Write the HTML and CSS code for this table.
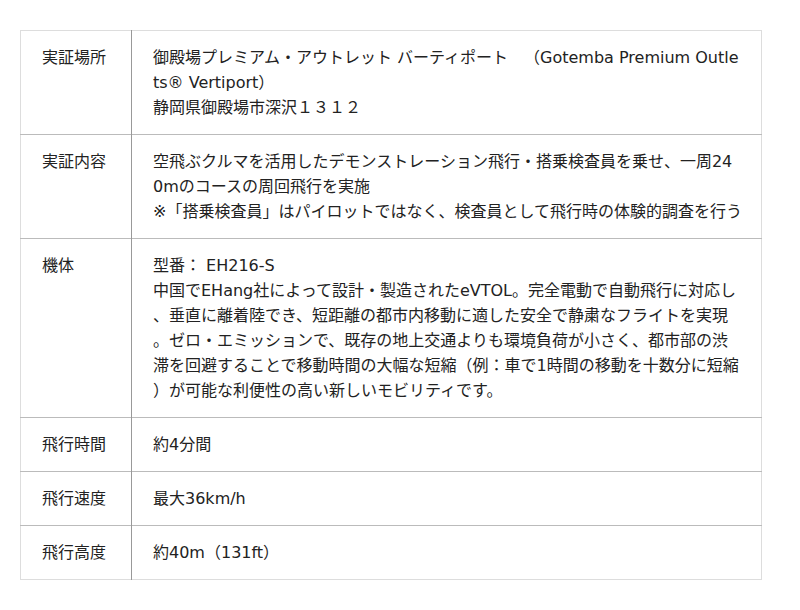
FILE: index.html
```html
<!DOCTYPE html>
<html lang="ja">
<head>
<meta charset="utf-8">
<link rel="stylesheet" href="styles.css">
</head>
<body>
<table class="spec">
  <tr>
    <th class="label">実証場所</th>
    <td class="value">御殿場プレミアム・アウトレット バーティポート　（Gotemba Premium Outle<br>ts® Vertiport）<br>静岡県御殿場市深沢１３１２</td>
  </tr>
  <tr>
    <th class="label">実証内容</th>
    <td class="value">空飛ぶクルマを活用したデモンストレーション飛行・搭乗検査員を乗せ、一周24<br>0mのコースの周回飛行を実施<br>※「搭乗検査員」はパイロットではなく、検査員として飛行時の体験的調査を行う</td>
  </tr>
  <tr>
    <th class="label">機体</th>
    <td class="value">型番： EH216-S<br>中国でEHang社によって設計・製造されたeVTOL。完全電動で自動飛行に対応し<br>、垂直に離着陸でき、短距離の都市内移動に適した安全で静粛なフライトを実現<br>。ゼロ・エミッションで、既存の地上交通よりも環境負荷が小さく、都市部の渋<br>滞を回避することで移動時間の大幅な短縮（例：車で1時間の移動を十数分に短縮<br>）が可能な利便性の高い新しいモビリティです。</td>
  </tr>
  <tr>
    <th class="label">飛行時間</th>
    <td class="value">約4分間</td>
  </tr>
  <tr>
    <th class="label">飛行速度</th>
    <td class="value">最大36km/h</td>
  </tr>
  <tr>
    <th class="label">飛行高度</th>
    <td class="value">約40m（131ft）</td>
  </tr>
</table>
</body>
</html>
```
FILE: styles.css
```css
html, body {
  margin: 0;
  padding: 0;
  background: #fff;
}
body {
  padding: 30px 0 0 20px;
  font-family: "DejaVu Sans", "Noto Sans CJK JP", sans-serif;
  font-size: 16px;
  line-height: 25px;
  color: #222;
  text-spacing-trim: space-all;
}
.spec {
  width: 742px;
  border-collapse: collapse;
  border: 1px solid #ddd;
  table-layout: fixed;
}
.spec tr + tr th,
.spec tr + tr td {
  border-top: 1px solid #bbb;
}
.label {
  width: 68px;
  padding: 14px 21px;
  text-align: left;
  vertical-align: top;
  font-weight: normal;
  border-right: 1px solid #999;
}
.value {
  padding: 14px 14px 14px 21px;
  vertical-align: top;
  line-break: anywhere;
}
```
